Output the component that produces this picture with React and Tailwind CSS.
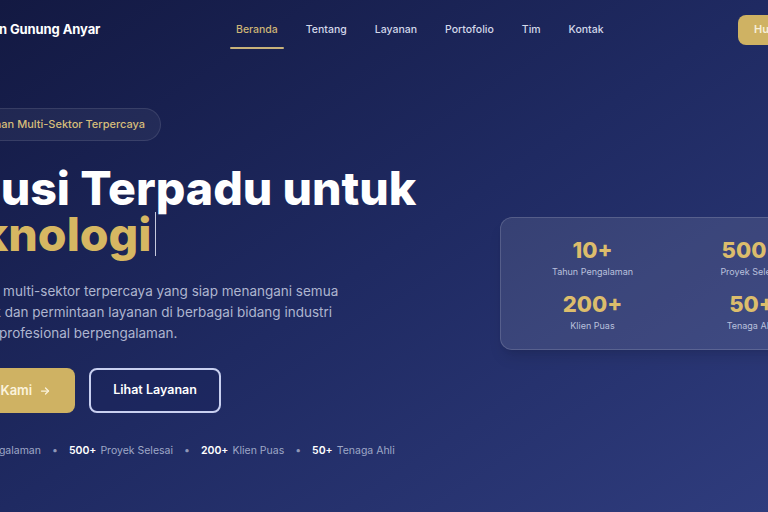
import React from "react";

const font = { fontFamily: "Inter, 'Noto Sans', sans-serif" };

function Stat({ num, label }) {
  return (
    <div className="flex flex-col items-center">
      <div className="text-[22px] leading-[28px] font-extrabold text-[#dcbd6c]">{num}</div>
      <div className="mt-[2px] text-[9px] leading-[12px] text-[#b9c0dc]">{label}</div>
    </div>
  );
}

export default function App() {
  return (
    <div
      style={font}
      className="relative w-[768px] h-[512px] overflow-hidden bg-gradient-to-br from-[#131942] via-[#1f2a62] to-[#2f3c7d] text-white"
    >
      {/* Header */}
      <header className="flex items-center h-[58px] pt-[1px]">
        <div className="ml-[-58px] w-[288px] shrink-0 text-[13px] font-bold tracking-[-0.1px] text-white whitespace-nowrap">
          Pelayanan Gunung Anyar
        </div>
        <nav className="flex items-center gap-4 w-[379px] shrink-0 text-[10.5px] font-medium">
          <a className="relative px-[6px] py-[6px] text-[#cdb576]">
            Beranda
            <span className="absolute left-0 right-0 bottom-[-6px] h-[2px] rounded-full bg-[#c8b27a]" />
          </a>
          <a className="px-[6px] py-[6px] text-[#d3d8ea]">Tentang</a>
          <a className="px-[6px] py-[6px] text-[#d3d8ea]">Layanan</a>
          <a className="px-[6px] py-[6px] text-[#d3d8ea]">Portofolio</a>
          <a className="px-[6px] py-[6px] text-[#d3d8ea]">Tim</a>
          <a className="px-[6px] py-[6px] text-[#d3d8ea]">Kontak</a>
        </nav>
        <button className="ml-[129px] shrink-0 h-[30px] px-4 rounded-lg bg-[#cfb263] text-[11px] font-semibold text-[#f7efd8] whitespace-nowrap">
          Hubungi Kami
        </button>
      </header>

      {/* Hero */}
      <section className="flex items-start ml-[-72px] mt-[50px]">
        <div className="w-[572px] shrink-0">
          <div className="inline-flex items-center h-[33px] pl-[23px] pr-[15px] rounded-full bg-white/5 border border-white/10 text-[11px] font-medium text-[#d6bd7a] whitespace-nowrap">
            Perusahaan Multi-Sektor Terpercaya
          </div>
          <h1 className="mt-[24px] text-[46.5px] leading-[46px] font-extrabold whitespace-nowrap">
            <span className="block text-white">Solusi Terpadu untuk</span>
            <span className="flex items-center ml-[-3px]">
              <span className="text-[#d6b762]">Teknologi</span>
              <span className="inline-block ml-[3px] w-[1.5px] h-[44px] bg-[#c5c9dc]" />
            </span>
          </h1>
          <p className="ml-[-4px] mt-[24px] text-[13.5px] leading-[21px] text-[#aeb5cf] whitespace-nowrap">
            Perusahaan multi-sektor terpercaya yang siap menangani semua
            <br />
            jenis proyek dan permintaan layanan di berbagai bidang industri
            <br />
            dengan tim profesional berpengalaman.
          </p>
          <div className="mt-[24px] flex items-center gap-[14px]">
            <button className="ml-[-8px] h-[45px] px-6 rounded-lg bg-[#cfb263] flex items-center gap-[7px] text-[13px] font-semibold text-[#fbf3dc] whitespace-nowrap">
              Hubungi Kami
              <svg width="12" height="12" viewBox="0 0 24 24" fill="none" stroke="currentColor" strokeWidth="2.5" strokeLinecap="round" strokeLinejoin="round">
                <path d="M5 12h14" />
                <path d="M13 6l6 6-6 6" />
              </svg>
            </button>
            <button className="h-[45px] px-[22px] rounded-lg border-2 border-[#c9d0f0] bg-[#182259]/40 text-[12.5px] font-semibold text-white whitespace-nowrap">
              Lihat Layanan
            </button>
          </div>
          <div className="ml-[-4px] mt-[30px] flex items-center text-[10.5px] leading-[16px] whitespace-nowrap">
            <span className="font-semibold text-white">10+</span>
            <span className="ml-[4px] text-[#9ea7c6]">Tahun Pengalaman</span>
            <span className="mx-[11px] text-[#8e97b8]">•</span>
            <span className="font-semibold text-white">500+</span>
            <span className="ml-[4px] text-[#9ea7c6]">Proyek Selesai</span>
            <span className="mx-[11px] text-[#8e97b8]">•</span>
            <span className="font-semibold text-white">200+</span>
            <span className="ml-[4px] text-[#9ea7c6]">Klien Puas</span>
            <span className="mx-[11px] text-[#8e97b8]">•</span>
            <span className="font-semibold text-white">50+</span>
            <span className="ml-[4px] text-[#9ea7c6]">Tenaga Ahli</span>
          </div>
        </div>

        <div className="shrink-0 mt-[109px] w-[344px] h-[133px] rounded-xl bg-white/10 border border-white/15 px-4 pt-[18px] pb-[18px] grid grid-cols-2 gap-x-2 gap-y-[12px] shadow-lg">
          <Stat num="10+" label="Tahun Pengalaman" />
          <Stat num="500+" label="Proyek Selesai" />
          <Stat num="200+" label="Klien Puas" />
          <Stat num="50+" label="Tenaga Ahli" />
        </div>
      </section>
    </div>
  );
}
